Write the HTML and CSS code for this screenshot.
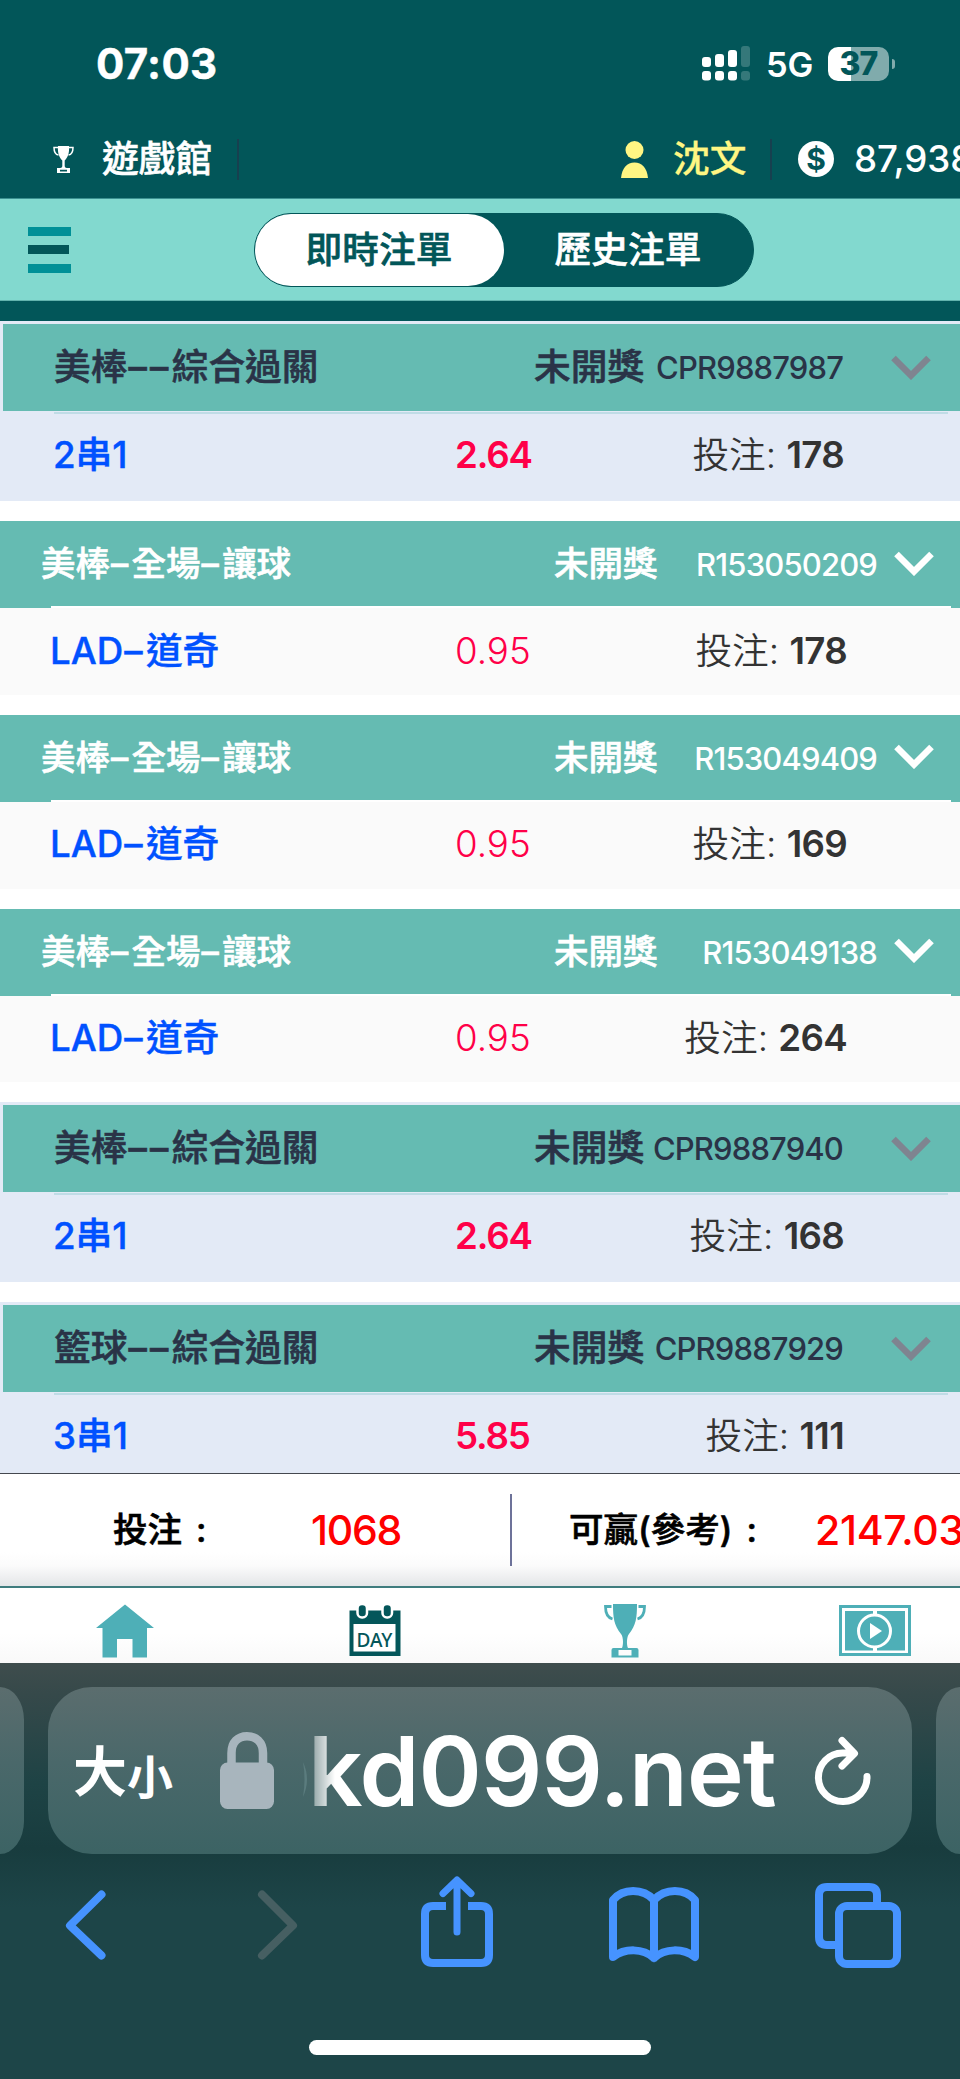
FILE: index.html
```html
<!DOCTYPE html>
<html lang="zh-Hant">
<head>
<meta charset="utf-8">
<title>即時注單</title>
<link rel="stylesheet" href="styles.css">
</head>
<body>
<svg class="sprite" aria-hidden="true">
  <symbol id="chevron" viewBox="0 0 40 25"><path d="M2.5 3 20 20.500 37.500 3" fill="none" stroke="currentColor" stroke-width="6.500"/></symbol>
</svg>

<div class="status-bar">
  <span class="clock">07:03</span>
  <svg class="signal" viewBox="0 0 48 35"><g fill="#fff"><rect y="11" width="9" height="10" rx="3"/><rect x="13" y="8" width="9" height="13" rx="3"/><rect x="26" y="4" width="9" height="17" rx="3"/><rect y="25" width="9" height="9.500" rx="3"/><rect x="13" y="25" width="9" height="9.500" rx="3"/><rect x="26" y="25" width="9" height="9.500" rx="3"/></g><g fill="#35787a"><rect x="39" width="9" height="21" rx="3"/><rect x="39" y="25" width="9" height="9.500" rx="3"/></g></svg>
  <span class="network">5G</span>
  <span class="battery"><span class="level">37</span></span>
  <span class="battery-tip"></span>
</div>

<div class="account-bar">
  <svg class="cup" viewBox="0 0 21 27"><path d="M5 0h11c.5 7-1 11-4.300 14.500V20c0 1 1 2 2 2H17v5H4v-5h3.300c1 0 2-1 2-2v-5.500C6 11 4.500 7 5 0zM7 23.700v1.800h7v-1.800z" fill="#fff" fill-rule="evenodd"/><path d="M5 1.500H1C1 6 2 8.500 5.500 9M16 1.500h4C20 6 19 8.500 15.500 9" fill="none" stroke="#fff" stroke-width="1.500"/></svg>
  <span class="hall">遊戲館</span>
  <i class="rule"></i>
  <svg class="person" viewBox="0 0 27 37" fill="#fff683"><circle cx="13.500" cy="9" r="9"/><path d="M0 37C1 27 6 21.500 13.500 21.500S26 27 27 37z"/></svg>
  <span class="user">沈文</span>
  <i class="rule rule-user"></i>
  <span class="coin">$</span>
  <span class="balance">87,938</span>
</div>

<div class="tab-bar">
  <span class="menu"><i></i><i></i><i></i></span>
  <div class="pill"><span class="tab active">即時注單</span><span class="tab">歷史注單</span></div>
</div>

<div class="bets">
  <div class="bet parlay">
    <div class="head"><span class="title">美棒<b>––</b>綜合過關</span><span class="state">未開獎</span><span class="ticket">CPR9887987</span><svg class="chevron"><use href="#chevron"/></svg></div>
    <div class="line"></div>
    <div class="body"><span class="pick">2串1</span><span class="odds">2.64</span><span class="stake">投注: <b>178</b></span></div>
  </div>
  <div class="bet single">
    <div class="head"><span class="title">美棒<b>–</b>全場<b>–</b>讓球</span><span class="state">未開獎</span><span class="ticket">R153050209</span><svg class="chevron"><use href="#chevron"/></svg></div>
    <div class="line"></div>
    <div class="body"><span class="pick">LAD<b>–</b>道奇</span><span class="odds">0.95</span><span class="stake">投注: <b>178</b></span></div>
  </div>
  <div class="bet single">
    <div class="head"><span class="title">美棒<b>–</b>全場<b>–</b>讓球</span><span class="state">未開獎</span><span class="ticket">R153049409</span><svg class="chevron"><use href="#chevron"/></svg></div>
    <div class="line"></div>
    <div class="body"><span class="pick">LAD<b>–</b>道奇</span><span class="odds">0.95</span><span class="stake">投注: <b>169</b></span></div>
  </div>
  <div class="bet single">
    <div class="head"><span class="title">美棒<b>–</b>全場<b>–</b>讓球</span><span class="state">未開獎</span><span class="ticket">R153049138</span><svg class="chevron"><use href="#chevron"/></svg></div>
    <div class="line"></div>
    <div class="body"><span class="pick">LAD<b>–</b>道奇</span><span class="odds">0.95</span><span class="stake">投注: <b>264</b></span></div>
  </div>
  <div class="bet parlay">
    <div class="head"><span class="title">美棒<b>––</b>綜合過關</span><span class="state">未開獎</span><span class="ticket">CPR9887940</span><svg class="chevron"><use href="#chevron"/></svg></div>
    <div class="line"></div>
    <div class="body"><span class="pick">2串1</span><span class="odds">2.64</span><span class="stake">投注: <b>168</b></span></div>
  </div>
  <div class="bet parlay">
    <div class="head"><span class="title">籃球<b>––</b>綜合過關</span><span class="state">未開獎</span><span class="ticket">CPR9887929</span><svg class="chevron"><use href="#chevron"/></svg></div>
    <div class="line"></div>
    <div class="body"><span class="pick">3串1</span><span class="odds">5.85</span><span class="stake">投注: <b>111</b></span></div>
  </div>
</div>

<div class="summary">
  <span class="sum-label">投注<em>:</em></span><span class="sum-value total">1068</span>
  <i class="sum-rule"></i>
  <span class="sum-label win">可贏(參考)<em>:</em></span><span class="sum-value payout">2147.03</span>
</div>

<div class="site-nav">
  <span class="nav-item"><svg width="58" height="54" viewBox="0 0 58 54"><path d="M29 .5 58 24h-7v29.500H36.500V35H21v18.500H6.500V24H0z" fill="#4eafb7"/></svg></span>
  <span class="nav-item"><svg width="52" height="54" viewBox="0 0 52 54"><path d="M.5 6.500h51V52H.500z" fill="#04565a"/><path d="M4.500 20h42v27.500h-42z" fill="#fff"/><g fill="#04565a" stroke="#fff" stroke-width="2.500"><rect x="8.500" y="0" width="9.500" height="13.500" rx="4.500"/><rect x="33.500" y="0" width="9.500" height="13.500" rx="4.500"/></g><text x="7.500" y="42.500" class="day" textLength="36" lengthAdjust="spacingAndGlyphs">DAY</text></svg></span>
  <span class="nav-item"><svg width="42" height="54" viewBox="0 0 42 54"><path d="M9 0h24c0 14-1 21-8 30-2.500 3-2.500 11-1 14h8.500q2 0 2 2v7.500h-27V46q0-2 2-2H18c1.500-3 1.500-11-1-14C10 21 9 14 9 0zM14.500 46v5.500h13V46z" fill="#4eafb7" fill-rule="evenodd"/><path d="M7.500 2.500H1.500C1.500 9 3 13.500 8.500 15M34.500 2.500h6C40.500 9 39 13.500 33.500 15" fill="none" stroke="#4eafb7" stroke-width="2.800"/></svg></span>
  <span class="nav-item"><svg width="72" height="52" viewBox="0 0 72 52"><path d="M1.500 2.500h69v48h-69z" fill="#fff" stroke="#4eafb7" stroke-width="3"/><path d="M6 7h60v39.500H6z" fill="#4eafb7"/><path d="M36 6v42" stroke="#fff" stroke-width="4"/><circle cx="35.500" cy="27" r="16" fill="#4eafb7" stroke="#fff" stroke-width="3"/><path d="M31 19v16l12-8z" fill="#fff"/></svg></span>
</div>

<div class="browser">
  <div class="address-row">
    <div class="side side-left"></div>
    <div class="address">
      <span class="size-big">大</span><span class="size-small">小</span>
      <svg class="lock" viewBox="0 0 54 77" fill="#a8b5bd"><rect y="30.500" width="54" height="46.500" rx="7.500"/><path d="M11.500 34V21C11.500 10 18 4.200 27 4.200S43 10 43 21v13" fill="none" stroke="#a8b5bd" stroke-width="8.500"/></svg>
      <svg class="sliver" viewBox="0 0 6 38"><path d="M1 1Q9 18 1 36 4 18 1 1z" fill="#5b7c7e"/></svg>
      <span class="url">kd099.net</span>
      <svg class="reload" viewBox="0 0 56 68" fill="none" stroke="#fff" stroke-width="7" stroke-linecap="round" stroke-linejoin="round"><path d="M52 39.500A24.300 24.300 0 1 1 27.500 16H37M27 3.500 39.500 16.500 27 29"/></svg>
    </div>
    <div class="side side-right"></div>
  </div>
  <div class="toolbar">
    <svg class="back" width="42" height="70" viewBox="0 0 42 70"><path d="M36.500 4.500 5 35.500 36.500 65.500"/></svg>
    <svg class="forward" width="42" height="70" viewBox="0 0 42 70"><path d="M5 4.500 36 35.500 5 65.500"/></svg>
    <svg class="share" width="72" height="92" viewBox="0 0 72 92"><path d="M25 30H12Q4 30 4 38V79Q4 87 12 87H60Q68 87 68 79V38Q68 30 60 30H47" stroke-linecap="butt"/><path d="M36 6V56M22 17.500 36 4 50 17.500" stroke-width="7"/></svg>
    <svg class="book" width="90" height="76" viewBox="0 0 90 76"><path d="M45 13C34 1 14 1 4 13V70C16 61 34 61 45 71 56 61 74 61 86 70V13C76 1 56 1 45 13V71"/></svg>
    <svg class="tabs" width="86" height="85" viewBox="0 0 86 85"><rect x="24" y="23" width="58" height="58" rx="8"/><path d="M62 19V12Q62 4 54 4H12Q4 4 4 12V54Q4 62 12 62H20" stroke-linecap="butt"/></svg>
  </div>
  <div class="home-bar"></div>
</div>
</body>
</html>
```

FILE: styles.css
```css
* { box-sizing: border-box; }
html { background: #1d4548; }
body { margin: 0; width: 960px; height: 2079px; overflow: hidden; font-family: Inter, "Noto Sans CJK TC", sans-serif; font-size: 36.700px; line-height: 1; color: #2a3347; white-space: nowrap; }
svg { display: block; flex: none; overflow: visible; }
span, i { display: block; flex: none; }
b { font-weight: inherit; }
.sprite { position: absolute; width: 0; height: 0; }

.status-bar { display: flex; height: 128px; padding: 46px 0 0 96px; background: #025659; color: #fff; }
.clock { width: 606px; font-size: 42px; font-weight: 700; line-height: 36px; letter-spacing: .3px; -webkit-text-stroke: .4px; }
.signal { width: 48px; height: 35px; }
.network { margin-left: 16px; width: 62px; font-size: 34.500px; font-weight: 600; line-height: 38px; letter-spacing: -.3px; }
.battery { width: 61px; height: 34px; margin-top: 1px; border-radius: 10px; background: linear-gradient(90deg, #fff 23px, #80abac 23px); color: #025659; text-align: center; }
.level { font-size: 32px; font-weight: 800; line-height: 34px; letter-spacing: -1px; }
.battery-tip { width: 3px; height: 10px; margin: 13px 0 0 3px; border-radius: 0 4px 4px 0; background: #80abac; }

.account-bar { display: flex; align-items: center; height: 70px; padding: 0 0 8px 53px; background: #025659; color: #fff; font-weight: 500; }
.cup { width: 21px; height: 27px; }
.hall { width: 110px; margin-left: 28px; -webkit-text-stroke: .6px; }
.rule { width: 2px; height: 41px; margin-left: 25px; background: #17404f; }
.person { width: 27px; height: 37px; margin-left: 382px; }
.user { width: 74px; margin-left: 25px; color: #fff683; -webkit-text-stroke: .3px; }
.rule-user { margin-left: 23px; }
.coin { width: 36px; height: 36px; margin-left: 26px; border-radius: 50%; background: #fff; color: #025659; font-size: 30px; font-weight: 700; line-height: 36px; text-align: center; }
.balance { margin-left: 20px; font-weight: 500; }

.tab-bar { display: flex; align-items: center; height: 103px; padding-left: 28px; border-top: 1px solid #3b9191; border-bottom: 1px solid #62b2ad; background: #82d9cf; }
.menu { display: grid; gap: 9.500px; width: 43px; margin-right: 183px; }
.menu i { height: 9px; background: #009097; }
.menu i:nth-child(2) { width: 41px; background: #025659; }
.pill { display: flex; width: 500px; height: 74px; border: 1px solid #025659; border-radius: 37px; background: #025659; }
.tab { width: 249px; height: 72px; padding-right: 1px; color: #fff; font-weight: 500; line-height: 72px; text-align: center; border-radius: 36px; -webkit-text-stroke: .6px; }
.active { background: #fff; color: #025659; }

.bets { display: flex; flex-direction: column; gap: 20px; height: 1172px; padding-top: 20px; overflow: hidden; background: linear-gradient(#025659 20px, #fff 20px); }
.bet { flex: none; }
.head, .body { display: flex; align-items: center; }
.head { background: #65bbb2; font-weight: 500; }
.title, .state { -webkit-text-stroke: .6px; }
.ticket { font-size: 31px; flex: 1; text-align: right; letter-spacing: -.85px; }
.chevron { width: 40px; height: 25px; }
.pick { color: #0051ff; font-weight: 500; -webkit-text-stroke: .4px; }
.odds { color: #ff0048; }
.stake { flex: 1; text-align: right; color: #333; font-weight: 350; }
.stake b { font-weight: 600; letter-spacing: -.7px; }
.title b, .pick b { letter-spacing: 3.300px; margin-left: 1px; }

.parlay { height: 180px; padding: 3px 0 0 3px; background: #e3eaf6; }
.parlay .head { height: 87px; padding: 0 29px 0 51px; }
.parlay .title { width: 480px; }
.parlay .state { width: 112px; }
.parlay .ticket { margin-right: 48px; }
.parlay .chevron { color: #7f8490; }
.parlay .line { height: 2px; margin: 1px 12px 0 51px; background: #c0dce6; }
.parlay .body { height: 82px; padding: 0 116px 0 50px; }
.parlay .pick { width: 402px; }
.parlay .odds { font-weight: 600; letter-spacing: -1.200px; }

.single { height: 173.750px; background: #fafafa; }
.single .head { height: 87px; padding: 0 26px 0 41px; color: #fff; }
.single .title { width: 513px; font-size: 34.500px; }
.single .state { width: 110px; font-size: 34.500px; }
.single .ticket { margin-right: 17px; }
.single .chevron { margin-bottom: 3px; }
.single .line { height: 2px; margin: -2px 9px 0 51px; background: #fff; }
.single .body { height: 86px; padding: 0 113px 0 50px; }
.single .pick { width: 405px; }
.single .odds { font-weight: 300; }

.summary { display: flex; align-items: center; height: 113px; padding-left: 113px; border-top: 1px solid #44484f; background: linear-gradient(#fff 70%, #fbfbfb 82%, #e4e6e8); color: #000; font-size: 34.500px; font-weight: 500; }
.sum-label { width: 198px; -webkit-text-stroke: .6px; }
.sum-label em { margin-left: 14px; font-style: normal; }
.sum-value { color: #f00; font-size: 41px; line-height: 36px; letter-spacing: -1.300px; }
.total { width: 199px; }
.payout { letter-spacing: -.3px; }
.sum-rule { width: 2px; height: 72px; background: #6d7299; }
.win { margin-left: 57px; width: 246px; }

.site-nav { display: grid; grid-template-columns: repeat(4, 250px); height: 77px; border-top: 2px solid #3f7c7e; background: linear-gradient(#fff 60%, #f9f9f9); }
.nav-item { display: flex; justify-content: center; padding-top: 16px; }
.day { font: 500 20px "Noto Sans", sans-serif; fill: #04565a; }

.browser { height: 416px; padding-top: 24px; background: linear-gradient(#3f4d4d, #36494a 30px, #1e4345 120px, #183c3e 185px, #1d4548 245px); }
.address-row { display: flex; gap: 24px; height: 167px; }
.side { width: 24px; background: linear-gradient(#5b6d6e, #4a686a 45%, #3c6364); }
.side-left { border-radius: 0 32px 32px 0 / 0 44px 44px 0; }
.side-right { border-radius: 32px 0 0 32px / 44px 0 0 44px; }
.address { display: flex; align-items: center; width: 864px; padding-left: 25px; border-radius: 44px; background: linear-gradient(#5b6d6e, #4a686a 45%, #3c6364); color: #fff; font-weight: 700; }
.size-big { width: 54px; padding-top: 4px; font-size: 54px; }
.size-small { width: 45px; padding-top: 13px; font-size: 46px; }
.lock { width: 54px; height: 77px; margin-left: 48px; }
.sliver { width: 6px; height: 38px; margin: 18px 0 0 28px; }
.url { width: 474px; height: 116px; margin-left: 0; font-size: 96px; font-weight: 600; line-height: 116px; letter-spacing: -.9px; -webkit-mask-image: linear-gradient(90deg, rgba(0,0,0,.4) 4px, #000 27px); mask-image: linear-gradient(90deg, rgba(0,0,0,.4) 4px, #000 27px); }
.reload { width: 56px; height: 68px; margin-left: 33px; }
.toolbar { display: flex; align-items: flex-start; height: 186px; padding-left: 65px; fill: none; stroke: #4693ff; stroke-width: 8px; stroke-linecap: round; stroke-linejoin: round; }
.back { margin-top: 36px; }
.forward { margin: 36px 0 0 150px; stroke: #465f62; }
.share { margin: 22px 0 0 122px; }
.book { margin: 33px 0 0 116px; }
.tabs { margin: 29px 0 0 116px; }
.home-bar { width: 342px; height: 15px; margin: 0 auto; border-radius: 8px; background: #fff; }
```
